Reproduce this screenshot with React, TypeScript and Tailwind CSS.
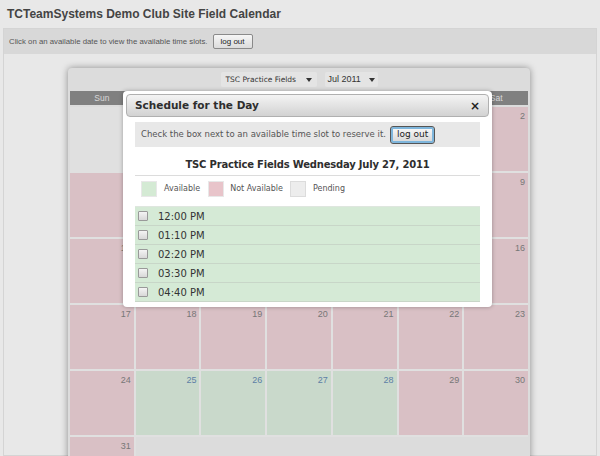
const days: (number | null)[] = [
  null, null, null, null, null, 1, 2,
  3, 4, 5, 6, 7, 8, 9,
  10, 11, 12, 13, 14, 15, 16,
  17, 18, 19, 20, 21, 22, 23,
  24, 25, 26, 27, 28, 29, 30,
  31,
];

const open = [25, 26, 27, 28];
const slots = ['12:00 PM', '01:10 PM', '02:20 PM', '03:30 PM', '04:40 PM'];
const weekdays = ['Sun', 'Mon', 'Tue', 'Wed', 'Thu', 'Fri', 'Sat'];

function Caret() {
  return <span className="ml-auto inline-block h-0 w-0 border-x-[3px] border-t-[4px] border-x-transparent border-t-[#333]" />;
}

export default function App() {
  return (
    <div
      className="relative h-[456px] w-[600px] overflow-hidden bg-[#e8e8e8]"
      style={{ fontFamily: '"Liberation Sans", Arial, sans-serif' }}
    >
      {/* Page title */}
      <h1 className="h-[28px] px-[7px] pt-[6px] text-[12px] font-bold leading-[16px] text-[#444]">
        TCTeamSystems Demo Club Site Field Calendar
      </h1>

      <div className="mx-[3px] h-[428px] border border-[#d4d4d4]">
        {/* Top bar */}
        <div className="flex h-[25px] items-center gap-[5px] bg-[#d8d8d8] px-[5px] text-[7.8px] text-[#555]">
          <span>Click on an available date to view the available time slots.</span>
          <button className="h-[15px] w-[40px] rounded-[2px] border border-[#8a8a8a] bg-gradient-to-b from-[#f6f6f6] to-[#dcdcdc] text-[8px] leading-[13px] text-[#222]">
            log out
          </button>
        </div>

        {/* Calendar */}
        <div className="ml-[64px] mt-[14px] h-[400px] w-[462px] rounded-t-[4px] bg-[#dcdcdc] px-[2px] pt-[4px] shadow-[0_0_7px_rgba(0,0,0,0.4)]">
          <div className="flex h-[15px] justify-center gap-[8px] text-[8.5px] text-[#333]">
            <div className="flex w-[96px] items-center rounded-[2px] bg-[#e4e4e4] px-[5px]" style={{ fontFamily: '"DejaVu Sans", Verdana, sans-serif', fontSize: '7.5px' }}>
              TSC Practice Fields
              <Caret />
            </div>
            <div className="flex w-[53px] items-center rounded-[2px] bg-[#e4e4e4] px-[3px] text-[9px]">
              Jul 2011
              <Caret />
            </div>
          </div>

          <div className="mt-[4px] grid grid-cols-7 gap-x-[2px]">
            {weekdays.map(d => (
              <div key={d} className="h-[14px] bg-[#808080] text-center text-[8.5px] leading-[14px] text-[#d8d8d8]">
                {d}
              </div>
            ))}
          </div>

          <div className="mt-[2px] grid grid-cols-7 gap-[2px] bg-[#e0e0e0]">
            {days.map((d, i) => (
              <div
                key={i}
                className={
                  'h-[64px] pr-[3px] pt-[3px] text-right text-[9px] ' +
                  (d === null
                    ? 'bg-[#e0e0e0]'
                    : open.includes(d)
                      ? 'bg-[#c9d9cb] text-[#5d7fa6]'
                      : 'bg-[#d9c0c5] text-[#777]')
                }
              >
                {d}
              </div>
            ))}
            <div className="col-span-6 bg-[#dcdcdc]" />
          </div>
        </div>
      </div>

      {/* Schedule dialog */}
      <div
        className="absolute left-[123px] top-[91px] h-[216px] w-[369px] rounded-[4px] bg-white p-[3px] shadow-[0_0_4px_rgba(0,0,0,0.3)]"
        style={{ fontFamily: '"DejaVu Sans", Verdana, sans-serif' }}
      >
        <div className="flex h-[23px] items-center rounded-[4px] border border-[#b0b0b0] bg-gradient-to-b from-[#f4f4f4] to-[#d2d2d2] pl-[8px] pr-[8px]">
          <span className="text-[10.5px] font-bold text-[#2e2e2e]">Schedule for the Day</span>
          <span className="ml-auto text-[12px] font-bold leading-none text-[#222]">×</span>
        </div>

        <div className="px-[9px]">
          <div className="mt-[5px] flex h-[25px] items-center gap-[5px] bg-[#e8e8e8] pl-[6px] text-[8.5px] text-[#555]">
            <span>Check the box next to an available time slot to reserve it.</span>
            <button className="h-[16px] rounded-[2px] border-2 border-[#7fb6dc] bg-gradient-to-b from-[#f6f6f6] to-[#dadada] px-[4px] text-[9px] leading-[11px] text-[#222] outline outline-1 outline-[#555]">
              log out
            </button>
          </div>

          <div className="mt-[10px] border-b border-[#dcdcdc] pb-[3px] text-center text-[10px] font-bold tracking-[-0.2px] text-[#2e2e2e]">
            TSC Practice Fields Wednesday July 27, 2011
          </div>

          <div className="mt-[5px] flex items-center pl-[6px] text-[8px] text-[#555]">
            <span className="h-[16px] w-[16px] border border-[#e8e8e8] bg-[#d4ead4]" />
            <span className="ml-[7px]">Available</span>
            <span className="ml-[8px] h-[16px] w-[16px] border border-[#e8e8e8] bg-[#e8c4ca]" />
            <span className="ml-[6px]">Not Available</span>
            <span className="ml-[7px] h-[16px] w-[16px] border border-[#dcdcdc] bg-[#ededed]" />
            <span className="ml-[7px]">Pending</span>
          </div>

          <div className="mt-[9px] border-t border-[#dfe6df]">
            {slots.map(s => (
              <div key={s} className="flex h-[19px] items-center border-b border-[#c8d6c8] bg-[#d5ead6] pl-[3px] text-[10px] text-[#333]">
                <span className="h-[10px] w-[10px] rounded-[1px] border border-[#999] bg-gradient-to-b from-[#f4f4f4] to-[#d8d8d8]" />
                <span className="ml-[10px]">{s}</span>
              </div>
            ))}
          </div>
        </div>
      </div>
    </div>
  );
}
